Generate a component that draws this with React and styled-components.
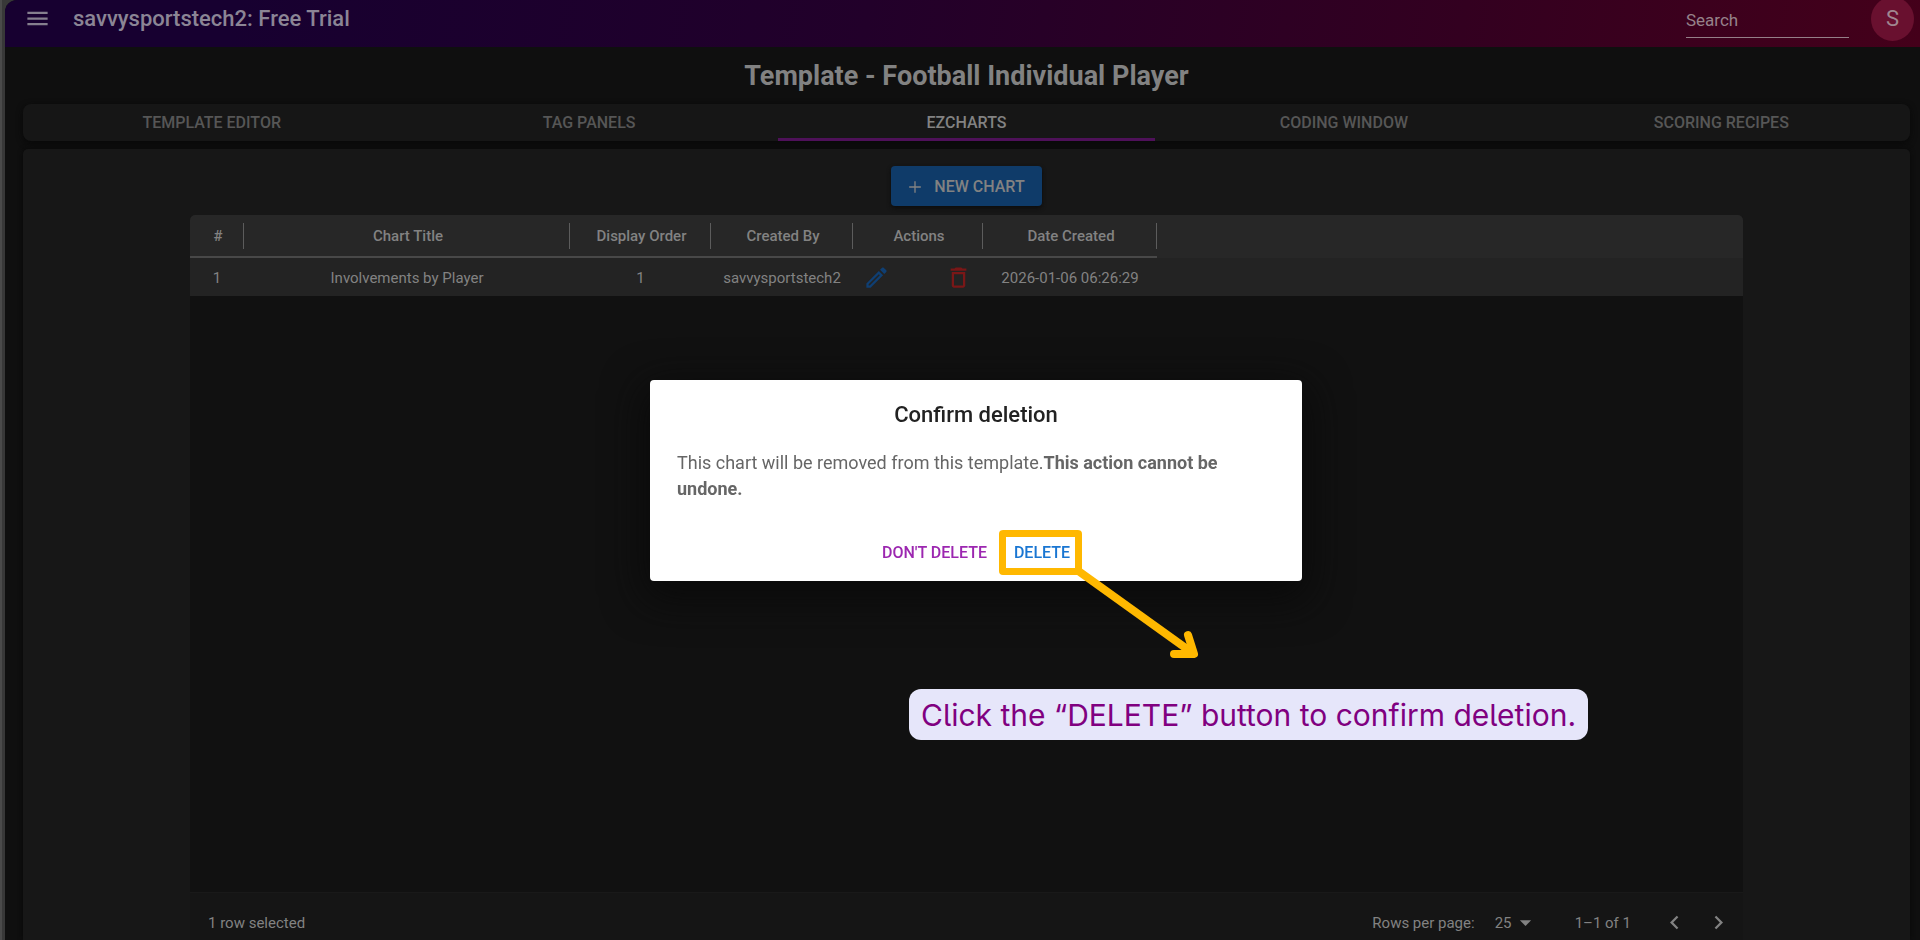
import React from "react";
import styled, { createGlobalStyle } from "styled-components";

const GlobalStyle = createGlobalStyle`
  *, *::before, *::after { box-sizing: border-box; }
  body {
    margin: 0;
    background: #0f0f0f;
    color: #828282;
    font-family: Roboto, "Liberation Sans", sans-serif;
    font-size: 15px;
    line-height: 20px;
  }
  button, input, select { font: inherit; color: inherit; }
  button { padding: 0; border: 0; background: none; cursor: pointer; }
`;

const Frame = styled.div`
  display: flex;
  flex-direction: column;
  min-height: 100vh;
  padding-left: 5px;
  background: linear-gradient(90deg, #4a4a4a 2px, #383838 2px);
`;

const Page = styled.div`
  flex: 1;
  display: flex;
  flex-direction: column;
  overflow: hidden;
  border-top-left-radius: 12px;
  background: #0f0f0f;
`;

const TopBar = styled.header`
  display: flex;
  align-items: center;
  height: 47px;
  padding: 0 6px 10px 19px;
  background: linear-gradient(100deg, #170030 12%, #22002a 45%, #330020 76%, #44001a 100%);
`;

const MenuButton = styled.button`
  display: flex;
  margin-right: 22px;
  color: #857f8e;
`;

const Account = styled.div`
  flex: 1;
  color: #8b8595;
  font-size: 22px;
  font-weight: 500;
  line-height: 28px;
`;

const SearchInput = styled.input`
  width: 163px;
  height: 35px;
  margin: 4px 22px 0 0;
  padding: 0;
  border: 0;
  border-bottom: 1px solid #957f88;
  outline: 0;
  background: none;
  font-size: 17px;
  &::placeholder { color: #96828a; opacity: 1; }
`;

const Avatar = styled.button`
  flex: none;
  width: 43px;
  height: 44px;
  border-radius: 50%;
  background: #69102f;
  color: #a08790;
  font-size: 22px;
`;

const Main = styled.main`
  flex: 1;
  display: flex;
  flex-direction: column;
  padding: 0 10px 0 18px;
`;

const PageTitle = styled.h1`
  margin: 0;
  padding: 11px 0 10px;
  color: #828282;
  font-size: 27px;
  font-weight: 700;
  line-height: 36px;
  text-align: center;
`;

const TabBar = styled.nav`
  display: flex;
  height: 37px;
  margin-bottom: 8px;
  border-radius: 8px;
  background: #161616;
  box-shadow: 0 2px 6px #080808;
`;

const Tab = styled.button`
  flex: 1;
  border-top: 3px solid transparent;
  border-bottom: 3px solid ${(p) => (p.$active ? "#4e1159" : "transparent")};
  color: ${(p) => (p.$active ? "#828282" : "#565656")};
  font-size: 16px;
  font-weight: 500;
`;

const Panel = styled.section`
  flex: 1;
  display: flex;
  flex-direction: column;
  align-items: center;
  padding-top: 17px;
  border-radius: 5px 5px 0 0;
  background: #171717;
  box-shadow: 0 0 5px #090909;
`;

const NewChartButton = styled.button`
  display: flex;
  align-items: center;
  gap: 9px;
  height: 40px;
  margin-bottom: 9px;
  padding: 1px 17px 0 14px;
  border-radius: 4px;
  background: #0f3b69;
  box-shadow: 0 2px 4px #0c0c0c;
  color: #828282;
  font-size: 16px;
  font-weight: 500;
`;

const Grid = styled.div`
  flex: 1;
  display: flex;
  flex-direction: column;
  width: calc(100% - 334px);
  overflow: hidden;
  border-radius: 5px 5px 0 0;
  background: #111111;
`;

const Table = styled.table`
  width: 100%;
  table-layout: fixed;
  border-collapse: separate;
  border-spacing: 0;
  text-align: center;
`;

const Col = styled.col`
  width: ${(p) => (p.$width ? `${p.$width}px` : "auto")};
`;

const HeadCell = styled.th`
  position: relative;
  height: 43px;
  padding: 0 0 0 2px;
  border-bottom: 2px solid ${(p) => (p.$blank ? "#272727" : "#484848")};
  background: #272727;
  font-weight: 500;
  &::after {
    content: "";
    display: ${(p) => (p.$blank ? "none" : "block")};
    position: absolute;
    top: 8px;
    right: 0;
    width: 1px;
    height: 26px;
    background: #5c5c5c;
  }
`;

const Cell = styled.td`
  height: 38px;
  padding: 1px 0 0;
  background: #232323;
`;

const Actions = styled.div`
  display: flex;
  justify-content: space-between;
  padding: 0 11px 0 10px;
`;

const IconButton = styled.button`
  display: flex;
  color: ${(p) => p.$color || "inherit"};
`;

const Footer = styled.footer`
  display: flex;
  align-items: center;
  height: 48px;
  margin-top: auto;
  padding: 12px 11px 0 18px;
  border-top: 1px solid #191919;
  background: #151515;
`;

const Selected = styled.span`
  flex: 1;
`;

const PageSize = styled.label`
  display: flex;
  align-items: center;
  gap: 20px;
  margin-right: 36px;
`;

const SelectWrap = styled.span`
  display: grid;
  align-items: center;
  width: 44px;
  svg { grid-area: 1 / 1; justify-self: end; pointer-events: none; }
`;

const Select = styled.select`
  grid-area: 1 / 1;
  appearance: none;
  padding: 0;
  border: 0;
  outline: 0;
  background: none;
`;

const Pager = styled.div`
  display: flex;
  gap: 17px;
  margin-left: 30px;
`;

const Overlay = styled.div`
  position: fixed;
  inset: 20px 0 0 32px;
  display: flex;
  align-items: center;
  justify-content: center;
`;

const Dialog = styled.div`
  position: relative;
  width: 652px;
  padding: 17px 27px 9px;
  border-radius: 4px;
  background: #ffffff;
  box-shadow: 0 12px 40px 6px #0a0a0a;
`;

const DialogTitle = styled.h2`
  margin: 0 0 17px;
  color: #222222;
  font-size: 22px;
  font-weight: 500;
  line-height: 36px;
  text-align: center;
`;

const DialogText = styled.p`
  margin: 0 0 32px;
  padding-right: 27px;
  color: #666666;
  font-size: 18px;
  line-height: 26px;
`;

const DialogActions = styled.div`
  display: flex;
  justify-content: center;
  gap: 27px;
`;

const DialogButton = styled.button`
  position: relative;
  height: 38px;
  color: ${(p) => p.$color};
  font-size: 16px;
  font-weight: 500;
`;

const Highlight = styled.span`
  position: absolute;
  inset: -4px -12px -3px -15px;
  border: 7px solid #ffb800;
  border-radius: 4px;
`;

const Arrow = styled.svg`
  position: absolute;
  top: 100%;
  left: 100%;
  overflow: visible;
`;

const Callout = styled.div`
  position: absolute;
  top: 309px;
  left: 259px;
  padding: 6px 12px 5px;
  border-radius: 12px;
  background: #e6e6fa;
  color: #800080;
  font-family: Inter, "Open Sans", sans-serif;
  font-feature-settings: "cv05";
  font-size: 30px;
  font-weight: 400;
  line-height: 40px;
  white-space: nowrap;
`;

const Icon = ({ path, size = 27 }) => (
  <svg width={size} height={size} viewBox="0 0 24 24" fill="currentColor" aria-hidden="true">
    <path d={path} />
  </svg>
);

const icons = {
  menu: "M3 18h18v-2H3zm0-5h18v-2H3zm0-7v2h18V6z",
  add: "M19 12.8h-6.2V19h-1.6v-6.2H5v-1.6h6.2V5h1.6v6.2H19z",
  edit: "m14.06 9.02.92.92L5.92 19H5v-.92zM17.66 3c-.25 0-.51.1-.7.29l-1.83 1.83 3.75 3.75 1.83-1.83c.39-.39.39-1.02 0-1.41l-2.34-2.34c-.2-.2-.45-.29-.71-.29m-3.6 3.19L3 17.25V21h3.75L17.81 9.94z",
  trash: "M6 19c0 1.1.9 2 2 2h8c1.1 0 2-.9 2-2V7H6zM8 9h8v10H8zm7.5-5-1-1h-5l-1 1H5v2h14V4z",
  drop: "m7 10 5 5 5-5z",
  prev: "M15.41 16.59 10.83 12l4.58-4.59L14 6l-6 6 6 6z",
  next: "M8.59 16.59 13.17 12 8.59 7.41 10 6l6 6-6 6z",
};

const tabs = ["TEMPLATE EDITOR", "TAG PANELS", "EZCHARTS", "CODING WINDOW", "SCORING RECIPES"];

const columns = [
  { label: "#", width: 54 },
  { label: "Chart Title", width: 326 },
  { label: "Display Order", width: 141 },
  { label: "Created By", width: 142 },
  { label: "Actions", width: 130 },
  { label: "Date Created", width: 174 },
];

export default function App() {
  return (
    <>
      <GlobalStyle />
      <Frame>
        <Page>
          <TopBar>
            <MenuButton aria-label="Menu"><Icon path={icons.menu} /></MenuButton>
            <Account>savvysportstech2: Free Trial</Account>
            <SearchInput type="text" placeholder="Search" aria-label="Search" />
            <Avatar aria-label="Account">S</Avatar>
          </TopBar>
          <Main>
            <PageTitle>Template - Football Individual Player</PageTitle>
            <TabBar>
              {tabs.map((tab) => (
                <Tab key={tab} $active={tab === "EZCHARTS"}>{tab}</Tab>
              ))}
            </TabBar>
            <Panel>
              <NewChartButton><Icon path={icons.add} size={20} />NEW CHART</NewChartButton>
              <Grid>
                <Table>
                  <colgroup>
                    {columns.map((c) => <Col key={c.label} $width={c.width} />)}
                    <Col />
                  </colgroup>
                  <thead>
                    <tr>
                      {columns.map((c) => <HeadCell key={c.label} scope="col">{c.label}</HeadCell>)}
                      <HeadCell as="td" $blank />
                    </tr>
                  </thead>
                  <tbody>
                    <tr>
                      <Cell>1</Cell>
                      <Cell>Involvements by Player</Cell>
                      <Cell>1</Cell>
                      <Cell>savvysportstech2</Cell>
                      <Cell>
                        <Actions>
                          <IconButton $color="#0f3f73" aria-label="Edit"><Icon path={icons.edit} /></IconButton>
                          <IconButton $color="#7a1717" aria-label="Delete"><Icon path={icons.trash} /></IconButton>
                        </Actions>
                      </Cell>
                      <Cell>2026-01-06 06:26:29</Cell>
                      <Cell />
                    </tr>
                  </tbody>
                </Table>
                <Footer>
                  <Selected>1 row selected</Selected>
                  <PageSize>
                    Rows per page:
                    <SelectWrap>
                      <Select defaultValue="25">
                        <option>25</option>
                        <option>50</option>
                        <option>100</option>
                      </Select>
                      <Icon path={icons.drop} />
                    </SelectWrap>
                  </PageSize>
                  <span>1–1 of 1</span>
                  <Pager>
                    <IconButton aria-label="Previous page"><Icon path={icons.prev} /></IconButton>
                    <IconButton aria-label="Next page"><Icon path={icons.next} /></IconButton>
                  </Pager>
                </Footer>
              </Grid>
            </Panel>
          </Main>
        </Page>
      </Frame>
      <Overlay>
        <Dialog role="dialog" aria-labelledby="confirm-title">
          <DialogTitle id="confirm-title">Confirm deletion</DialogTitle>
          <DialogText>
            This chart will be removed from this template.<strong>This action cannot be undone.</strong>
          </DialogText>
          <DialogActions>
            <DialogButton $color="#9c27b0">DON'T DELETE</DialogButton>
            <DialogButton $color="#1976d2">
              DELETE
              <Highlight>
                <Arrow width="120" height="90" fill="none" stroke="#ffb800" strokeLinecap="round" strokeLinejoin="round">
                  <path d="M2 2 119 86" strokeWidth="8" strokeLinecap="butt" />
                  <path d="M113 67 119 86H99" strokeWidth="8" />
                </Arrow>
              </Highlight>
            </DialogButton>
          </DialogActions>
          <Callout>Click the “DELETE” button to confirm deletion.</Callout>
        </Dialog>
      </Overlay>
    </>
  );
}
